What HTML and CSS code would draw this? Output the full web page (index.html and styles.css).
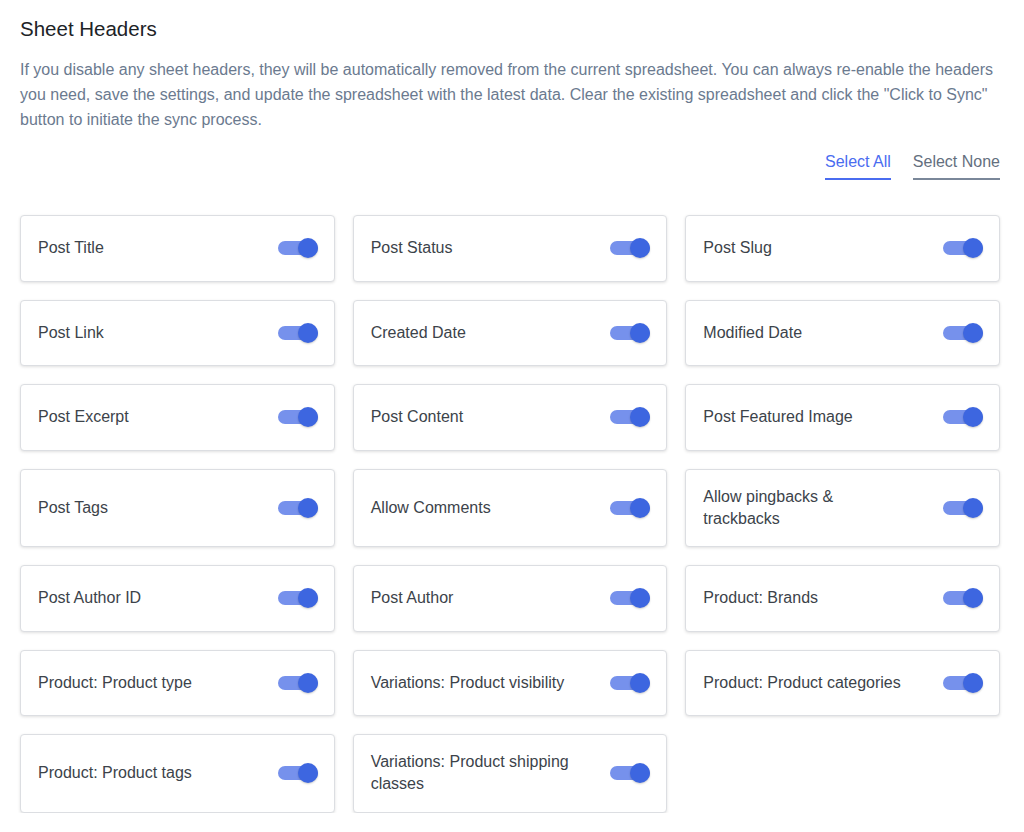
FILE: index.html
```html
<!DOCTYPE html>
<html>
<head>
<meta charset="utf-8">
<link rel="stylesheet" href="styles.css">
</head>
<body>
<div class="page">
  <h2 class="title">Sheet Headers</h2>
  <p class="desc">If you disable any sheet headers, they will be automatically removed from the current spreadsheet. You can always re-enable the headers you need, save the settings, and update the spreadsheet with the latest data. Clear the existing spreadsheet and click the "Click to Sync" button to initiate the sync process.</p>
  <div class="actions">
    <a class="act active">Select All</a>
    <a class="act">Select None</a>
  </div>
  <div class="grid">
    <div class="card"><span class="label">Post Title</span><span class="toggle"><span class="knob"></span></span></div>
    <div class="card"><span class="label">Post Status</span><span class="toggle"><span class="knob"></span></span></div>
    <div class="card"><span class="label">Post Slug</span><span class="toggle"><span class="knob"></span></span></div>
    <div class="card"><span class="label">Post Link</span><span class="toggle"><span class="knob"></span></span></div>
    <div class="card"><span class="label">Created Date</span><span class="toggle"><span class="knob"></span></span></div>
    <div class="card"><span class="label">Modified Date</span><span class="toggle"><span class="knob"></span></span></div>
    <div class="card"><span class="label">Post Excerpt</span><span class="toggle"><span class="knob"></span></span></div>
    <div class="card"><span class="label">Post Content</span><span class="toggle"><span class="knob"></span></span></div>
    <div class="card"><span class="label">Post Featured Image</span><span class="toggle"><span class="knob"></span></span></div>
    <div class="card"><span class="label">Post Tags</span><span class="toggle"><span class="knob"></span></span></div>
    <div class="card"><span class="label">Allow Comments</span><span class="toggle"><span class="knob"></span></span></div>
    <div class="card"><span class="label">Allow pingbacks &amp;<br>trackbacks</span><span class="toggle"><span class="knob"></span></span></div>
    <div class="card"><span class="label">Post Author ID</span><span class="toggle"><span class="knob"></span></span></div>
    <div class="card"><span class="label">Post Author</span><span class="toggle"><span class="knob"></span></span></div>
    <div class="card"><span class="label">Product: Brands</span><span class="toggle"><span class="knob"></span></span></div>
    <div class="card"><span class="label">Product: Product type</span><span class="toggle"><span class="knob"></span></span></div>
    <div class="card"><span class="label">Variations: Product visibility</span><span class="toggle"><span class="knob"></span></span></div>
    <div class="card"><span class="label">Product: Product categories</span><span class="toggle"><span class="knob"></span></span></div>
    <div class="card"><span class="label">Product: Product tags</span><span class="toggle"><span class="knob"></span></span></div>
    <div class="card"><span class="label">Variations: Product shipping<br>classes</span><span class="toggle"><span class="knob"></span></span></div>
  </div>
</div>
</body>
</html>
```

FILE: styles.css
```css
* { box-sizing: border-box; }
html, body { margin: 0; padding: 0; background: #ffffff; }
body { font-family: "Liberation Sans", Arial, sans-serif; }
.page { padding: 16px 24px 0 20px; width: 1024px; }
.title { margin: 0; font-size: 20.5px; font-weight: 400; color: #1d2327; line-height: 26px; }
.desc { margin: 15px 0 0 0; font-size: 16px; line-height: 25px; color: #6b7a8f; }
.actions { display: flex; justify-content: flex-end; gap: 22px; margin-top: 18px; }
.act { font-size: 16px; line-height: 24px; color: #646f7e; border-bottom: 2px solid #7a8799; padding-bottom: 4px; }
.act.active { color: #4a6cf0; border-bottom-color: #4a6cf0; }
.grid { display: grid; grid-template-columns: repeat(3, 1fr); column-gap: 18px; row-gap: 18px; margin-top: 35px; }
.card { display: flex; align-items: center; justify-content: space-between; border: 1px solid #dcdee2; border-radius: 4px; box-shadow: 0 1px 3px rgba(0,0,0,0.12); padding: 16.25px 16px 16.25px 17px; min-height: 66.5px; background: #fff; }
.label { font-size: 16px; line-height: 22px; color: #3c434a; }
.toggle { position: relative; width: 40px; height: 14px; border-radius: 7px; background: #7691ec; flex: none; }
.knob { position: absolute; right: 0; top: -3px; width: 20px; height: 20px; border-radius: 50%; background: #3d66e0; box-shadow: 0 1px 2px rgba(0,0,0,0.2); }
```
